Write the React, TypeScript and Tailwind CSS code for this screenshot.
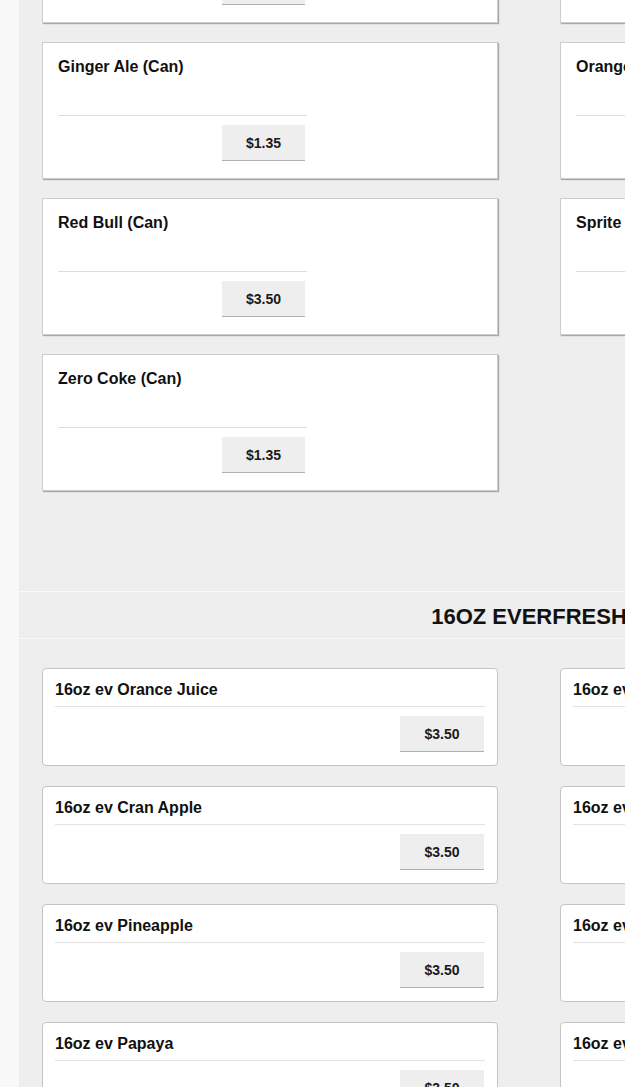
import React from "react";

type Item = { name: string; price: string };

const cans: [Item, Item][] = [
  [
    { name: "Diet Coke (Can)", price: "$1.35" },
    { name: "Coke (Can)", price: "$1.35" },
  ],
  [
    { name: "Ginger Ale (Can)", price: "$1.35" },
    { name: "Orange Soda (Can)", price: "$1.35" },
  ],
  [
    { name: "Red Bull (Can)", price: "$3.50" },
    { name: "Sprite (Can)", price: "$1.35" },
  ],
];

const everfresh: Item[] = [
  { name: "16oz ev Orance Juice", price: "$3.50" },
  { name: "16oz ev Apple Juice", price: "$3.50" },
  { name: "16oz ev Cran Apple", price: "$3.50" },
  { name: "16oz ev Grapefruit", price: "$3.50" },
  { name: "16oz ev Pineapple", price: "$3.50" },
  { name: "16oz ev Mango", price: "$3.50" },
  { name: "16oz ev Papaya", price: "$3.50" },
  { name: "16oz ev Fruit Punch", price: "$3.50" },
];

function PriceButton({ price, narrow }: { price: string; narrow?: boolean }) {
  return (
    <div
      className={[
        "h-[36px] pt-[2px] bg-[#eeeeee] border-b border-[#b0b0b0] flex items-center justify-center text-[14px] font-bold text-[#1a1a1a]",
        narrow ? "w-[83px]" : "w-[84px]",
      ].join(" ")}
    >
      {price}
    </div>
  );
}

function CanCard({ item }: { item: Item }) {
  return (
    <div className="h-[137px] bg-white border border-[#cccccc] shadow-[1px_1px_1px_#a8a8a8] px-[15px] pt-[15px]">
      <div className="w-[249px]">
        <div className="h-[57px] text-[16px] leading-[18px] font-bold text-[#111]">
          {item.name}
        </div>
        <div className="border-t border-[#dddddd]" />
        <div className="mt-[9px] flex justify-end pr-[2px]">
          <PriceButton price={item.price} narrow />
        </div>
      </div>
    </div>
  );
}

function JuiceCard({ item }: { item: Item }) {
  return (
    <div className="h-[98px] bg-white border border-[#c4c4c4] rounded-[4px] px-[12px] pt-[12px]">
      <div className="text-[16px] leading-[17px] font-bold text-[#111] pb-[8px] border-b border-[#e2e2e2]">
        {item.name}
      </div>
      <div className="mt-[9px] flex justify-end pr-[1px]">
        <PriceButton price={item.price} />
      </div>
    </div>
  );
}

export default function App() {
  return (
    <div
      className="h-screen w-full overflow-hidden bg-[#f8f8f8]"
      style={{ fontFamily: '"Liberation Sans", Arial, sans-serif' }}
    >
      <div className="flex w-[1039px] -mt-[134px]">
        <div className="w-[19px] shrink-0 bg-[#f8f8f8]" />

        <div className="w-[1020px] shrink-0 bg-[#eeeeee]">
          {/* cans */}
          <div className="pt-[20px] pb-[100px] px-[23px]">
            <div className="flex flex-col gap-[19px]">
              {cans.map((row, i) => (
                <div key={i} className="grid grid-cols-[456px_456px] gap-x-[62px]">
                  <CanCard item={row[0]} />
                  <CanCard item={row[1]} />
                </div>
              ))}
              <div className="grid grid-cols-[456px_456px] gap-x-[62px]">
                <CanCard item={{ name: "Zero Coke (Can)", price: "$1.35" }} />
              </div>
            </div>
          </div>

          {/* section header */}
          <div className="border-y border-[#f9f9f9] pt-[12px] pb-[8px] text-center text-[22px] leading-[26px] font-bold text-[#111]">
            16OZ EVERFRESH
          </div>

          {/* everfresh */}
          <div className="pt-[29px] pb-[40px] px-[23px]">
            <div className="grid grid-cols-[456px_456px] gap-x-[62px] gap-y-[20px]">
              {everfresh.map((item) => (
                <JuiceCard key={item.name} item={item} />
              ))}
            </div>
          </div>
        </div>
      </div>
    </div>
  );
}
